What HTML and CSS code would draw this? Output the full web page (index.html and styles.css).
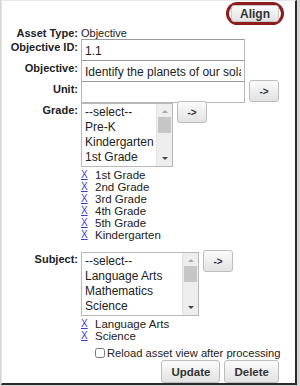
FILE: index.html
```html
<!DOCTYPE html>
<html lang="en">
<head>
    <meta charset="UTF-8">
    <title>Asset - Objective</title>
    <link rel="stylesheet" href="styles.css">
</head>
<body>
<div class="panel">
    <div class="toolbar">
        <span class="ring"><button class="btn align-btn">Align</button></span>
    </div>

    <div class="form">
        <div class="lbl">Asset Type:</div>
        <div class="val">Objective</div>

        <div class="lbl pad">Objective ID:</div>
        <div class="field"><input type="text" value="1.1"></div>

        <div class="lbl pad">Objective:</div>
        <div class="field"><input type="text" value="Identify the planets of our solar system"></div>

        <div class="lbl pad">Unit:</div>
        <div class="field row">
            <input type="text" value="">
            <button class="btn go">-&gt;</button>
        </div>

        <div class="lbl pad">Grade:</div>
        <div class="field">
            <div class="row">
                <div class="listbox grade">
                    <div class="opts">
                        <div>--select--</div>
                        <div>Pre-K</div>
                        <div>Kindergarten</div>
                        <div>1st Grade</div>
                    </div>
                    <div class="sb">
                        <span class="up"></span>
                        <span class="thumb"></span>
                        <span class="down"></span>
                    </div>
                </div>
                <button class="btn go">-&gt;</button>
            </div>
            <ul class="picked">
                <li><a href="#">X</a>1st Grade</li>
                <li><a href="#">X</a>2nd Grade</li>
                <li><a href="#">X</a>3rd Grade</li>
                <li><a href="#">X</a>4th Grade</li>
                <li><a href="#">X</a>5th Grade</li>
                <li><a href="#">X</a>Kindergarten</li>
            </ul>
        </div>

        <div class="lbl pad">Subject:</div>
        <div class="field">
            <div class="row">
                <div class="listbox subject">
                    <div class="opts">
                        <div>--select--</div>
                        <div>Language Arts</div>
                        <div>Mathematics</div>
                        <div>Science</div>
                    </div>
                    <div class="sb">
                        <span class="up"></span>
                        <span class="thumb"></span>
                        <span class="down"></span>
                    </div>
                </div>
                <button class="btn go">-&gt;</button>
            </div>
            <ul class="picked">
                <li><a href="#">X</a>Language Arts</li>
                <li><a href="#">X</a>Science</li>
            </ul>
        </div>
    </div>

    <label class="reload"><input type="checkbox">Reload asset view after processing</label>

    <div class="actions">
        <button class="btn">Update</button>
        <button class="btn">Delete</button>
    </div>
</div>
</body>
</html>
```

FILE: styles.css
```css
body {
    margin: 0;
    background: #d6d6d6;
    font-family: "Liberation Sans", Arial, sans-serif;
    font-size: 11px;
    color: #222;
}
.panel {
    width: 293px;
    height: 382px;
    background: #fff;
    border-left: 1px solid #e4e4e4;
    border-top: 1px solid #e8e8e8;
    border-right: 2px solid #2a2a2a;
    border-bottom: 2px solid #2a2a2a;
    margin-left: 1px;
    overflow: hidden;
}
.toolbar {
    display: flex;
    justify-content: flex-end;
    padding: 1px 11px 0 0;
    height: 25px;
}
.ring {
    display: inline-block;
    border: 3px solid #8e1c1c;
    border-radius: 12px;
    padding: 0 2px;
    height: 17px;
}
.btn {
    font-family: "Liberation Sans", Arial, sans-serif;
    font-size: 11px;
    font-weight: bold;
    color: #333;
    background: linear-gradient(#fbfbfb, #e2e2e2);
    border: 1px solid #bdbdbd;
    border-radius: 3px;
    padding: 0 8px;
    height: 22px;
    margin: 0;
}
.align-btn {
    height: 17px;
    padding: 0 8px;
    font-size: 12px;
    border-color: #c8c8c8;
}
.form {
    display: grid;
    grid-template-columns: 79px 1fr;
}
.lbl {
    font-weight: bold;
    text-align: right;
    padding-right: 3px;
    line-height: 12px;
}
.lbl.pad {
    padding-top: 2px;
}
.val {
    line-height: 12px;
}
.field input[type=text] {
    display: block;
    width: 164px;
    height: 22px;
    box-sizing: border-box;
    margin: 0 0 -1px 0;
    padding: 1px 3px 0;
    border: 1px solid #b8b8b8;
    border-top-color: #9a9a9a;
    font-family: "Liberation Sans", Arial, sans-serif;
    font-size: 12px;
    color: #222;
}
.row {
    display: flex;
    align-items: flex-start;
    gap: 4px;
}
.go {
    width: 30px;
    padding: 0;
    height: 22px;
    font-size: 10px;
}
.row input + .go {
    margin-top: -1px;
}
.listbox {
    display: flex;
    height: 62px;
    border: 1px solid #b8b8b8;
    margin-top: 1px;
}
.listbox.grade {
    width: 90px;
}
.listbox.subject {
    width: 116px;
}
.listbox + .go {
    margin-top: -1px;
}
.opts {
    flex: 1;
    padding: 1px 0 0 3px;
    line-height: 15px;
    font-size: 12px;
    overflow: hidden;
    white-space: nowrap;
}
.sb {
    width: 15px;
    background: #eeeeee;
    border-left: 1px solid #e2e2e2;
    display: flex;
    flex-direction: column;
    align-items: center;
}
.up, .down {
    width: 0;
    height: 0;
    border-left: 3px solid transparent;
    border-right: 3px solid transparent;
    margin: 6px 0 4px;
}
.up {
    border-bottom: 3px solid #a8a8a8;
}
.down {
    border-top: 3px solid #444;
    margin: auto 0 6px;
}
.thumb {
    width: 13px;
    height: 16px;
    background: #c6c6c6;
}
.picked {
    list-style: none;
    margin: 2px 0 10px;
    padding: 0;
    font-size: 11.5px;
}
.picked li {
    display: flex;
    align-items: center;
    height: 12px;
    line-height: 12px;
}
.picked a {
    width: 14px;
    color: #3b3bdf;
    font-size: 10px;
    text-decoration: underline;
}
.reload {
    display: flex;
    align-items: center;
    margin: -6px 0 0 93px;
    font-size: 11.2px;
    height: 13px;
}
.reload input {
    width: 10px;
    height: 10px;
    margin: 0 2px 0 0;
}
.actions {
    display: flex;
    justify-content: flex-end;
    gap: 4px;
    padding: 1px 16px 0 0;
}
.actions .btn {
    height: 23px;
    padding: 0 9px;
    font-size: 11.5px;
}
```
